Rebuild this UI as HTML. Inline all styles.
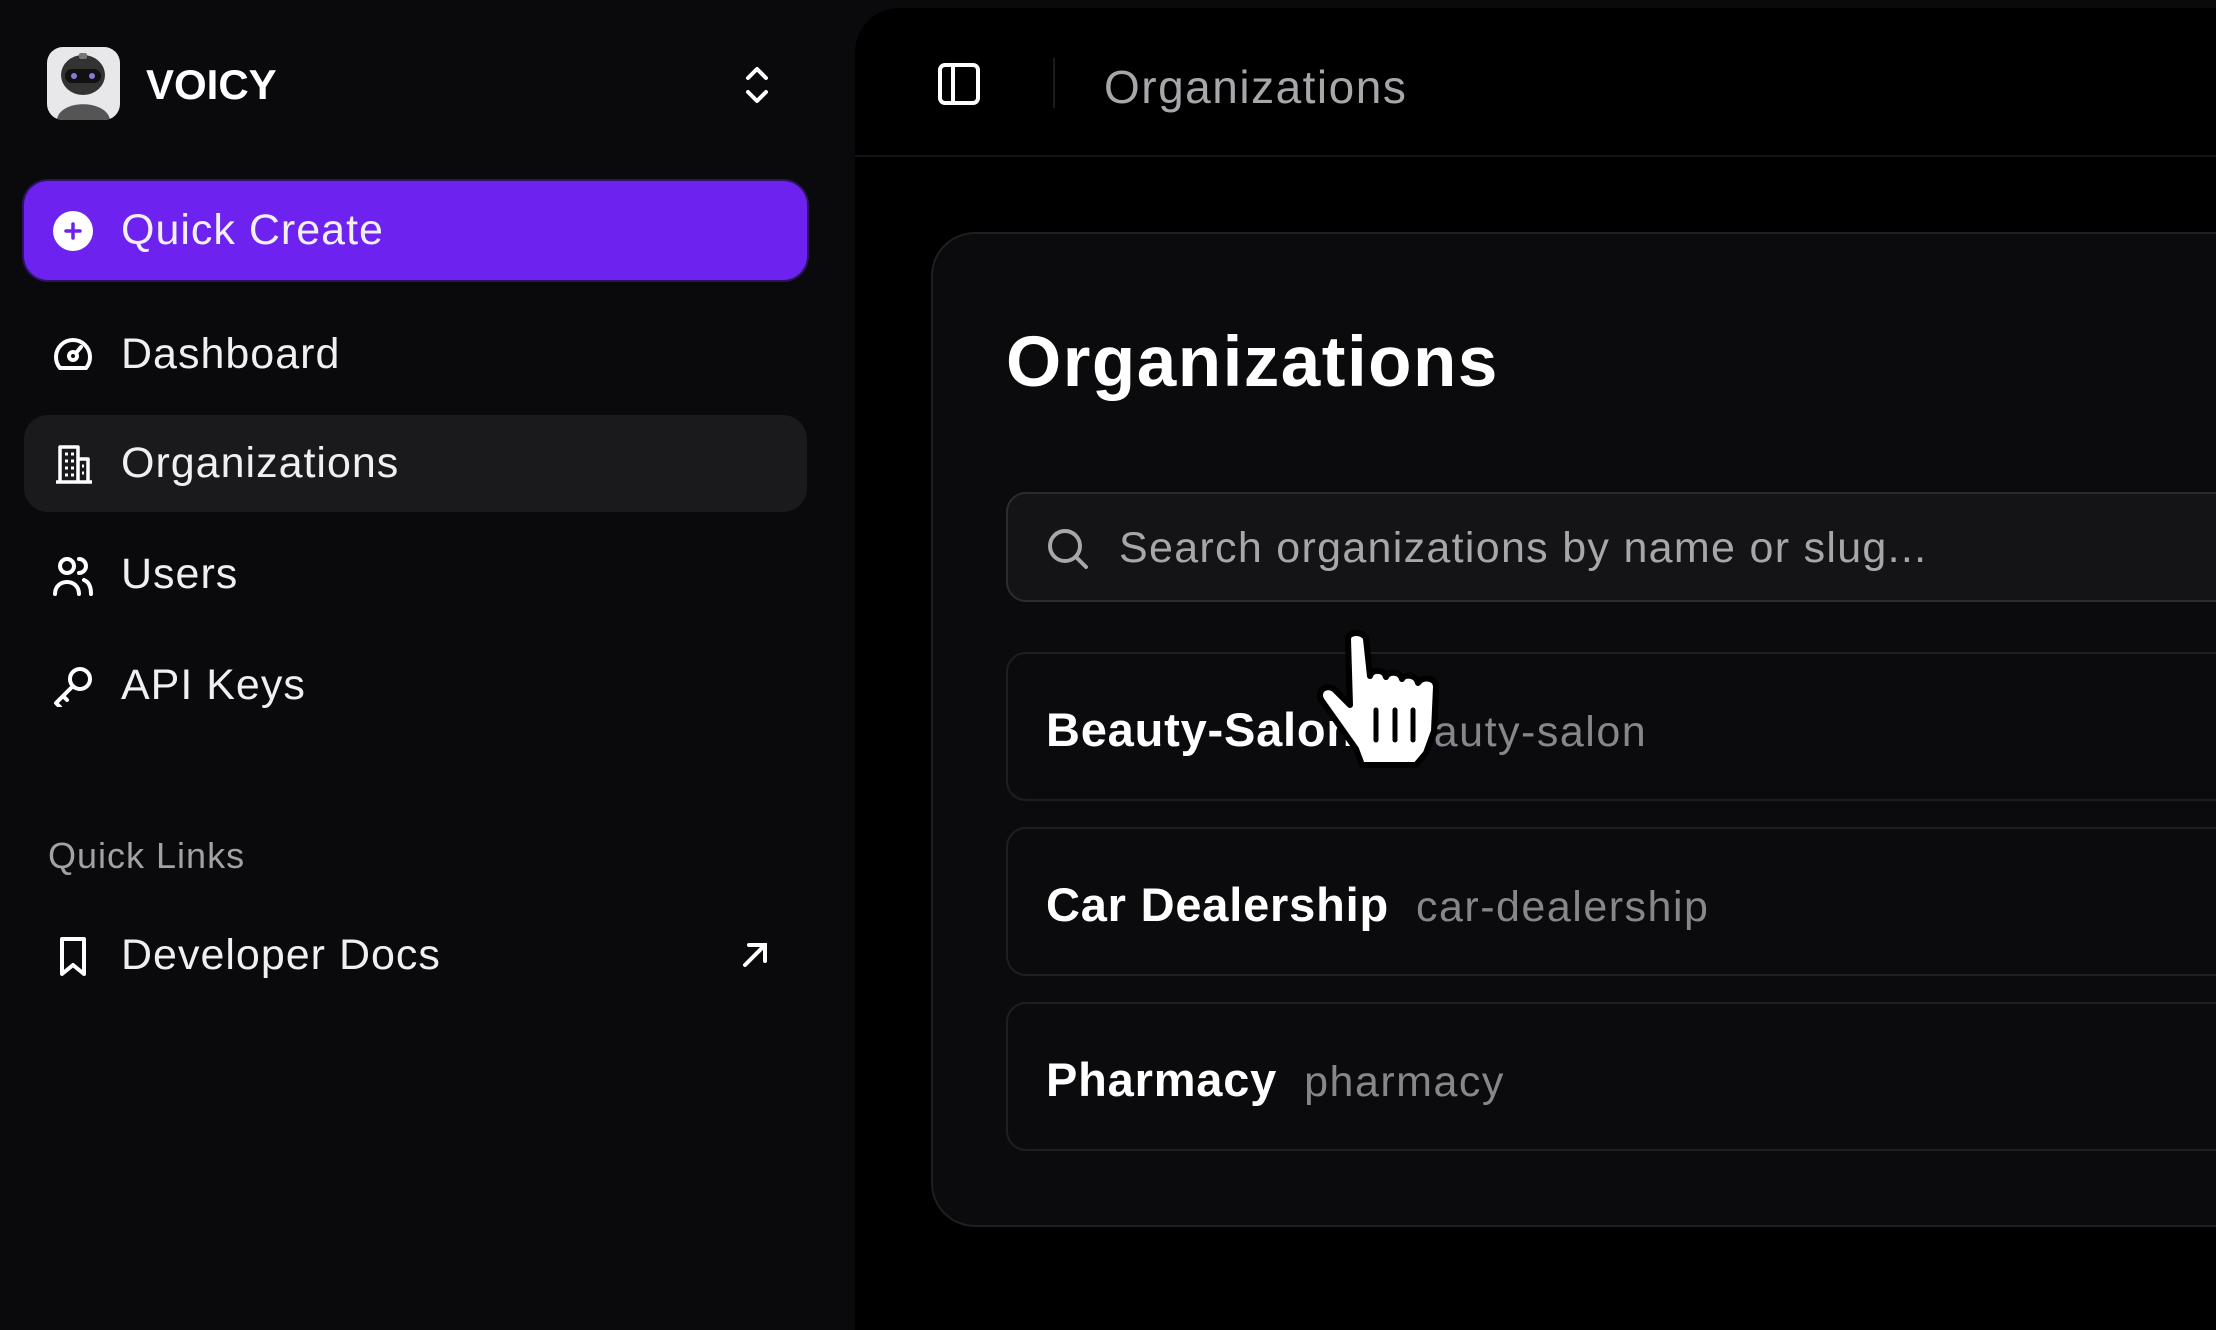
<!DOCTYPE html>
<html><head><meta charset="utf-8"><style>
*{margin:0;padding:0;box-sizing:border-box}
body{width:2216px;height:1330px;background:#0a0a0d;font-family:"Liberation Sans",sans-serif;color:#f4f4f5;position:relative;overflow:hidden}
.sb{position:absolute;left:0;top:0;width:855px;height:1330px;background:#0a0a0d}
.abs{position:absolute}
.item{position:absolute;left:24px;width:783px;height:97px;display:flex;align-items:center;font-size:43px;letter-spacing:1px;color:#f0f0f2}
.item .ic{position:absolute;left:28px;width:42px;height:42px}
.item span{position:absolute;left:97px}
.main{position:absolute;left:855px;top:8px;width:1361px;height:1322px;background:#000;border-top-left-radius:44px}
.nm{font-size:47px;font-weight:bold;color:#fff;letter-spacing:0.8px}
.sl{font-weight:normal;font-size:43px;color:#86868b;margin-left:27px;letter-spacing:1.5px}
</style></head><body>
<div class="sb">
  <div class="abs" style="left:47px;top:47px;width:73px;height:73px;border-radius:16px;background:#e8e8ea;overflow:hidden">
    <svg width="73" height="73" viewBox="0 0 73 73"><ellipse cx="36" cy="28" rx="22" ry="20" fill="#333"/><rect x="18" y="22" width="36" height="14" rx="7" fill="#111"/><circle cx="27" cy="29" r="3" fill="#8a7ad8"/><circle cx="45" cy="29" r="3" fill="#8a7ad8"/><path d="M10 73 C12 52 60 52 63 73Z" fill="#555"/><rect x="32" y="6" width="8" height="6" rx="2" fill="#777"/></svg>
  </div>
  <div class="abs" style="left:146px;top:61px;font-size:42px;font-weight:bold;color:#fff">VOICY</div>
  <svg class="abs" style="left:741px;top:64px" width="32" height="42" viewBox="0 0 32 42" fill="none" stroke="#fff" stroke-width="4" stroke-linecap="round" stroke-linejoin="round"><path d="M7 14 L16 5 L25 14"/><path d="M7 28 L16 37 L25 28"/></svg>

  <div class="item" style="top:181px;height:99px;background:#6d22f0;border-radius:24px;box-shadow:0 0 0 2px #2b1560">
    <svg class="ic" viewBox="0 0 42 42"><circle cx="21" cy="21" r="20" fill="#fff"/><path d="M21 14v14M14 21h14" stroke="#6d22f0" stroke-width="3.5" stroke-linecap="round"/></svg>
    <span>Quick Create</span>
  </div>
  <div class="item" style="top:306px">
    <svg class="ic" viewBox="0 0 42 42" fill="none" stroke="#fff" stroke-width="4" stroke-linecap="round"><path d="M8 34 A17 17 0 1 1 34 34 Z"/><circle cx="21" cy="22" r="4"/><path d="M24 19 L29 13"/></svg>
    <span>Dashboard</span>
  </div>
  <div class="item" style="top:415px;background:#1a1a1d;border-radius:24px">
    <svg class="ic" viewBox="0 0 42 42" fill="none" stroke="#fff" stroke-width="3.5" stroke-linejoin="round"><path d="M4 39h36M8 39V4h18v35M26 16h10v23"/><path d="M13 11h3M19 11h3M13 18h3M19 18h3M13 25h3M19 25h3M13 32h3M19 32h3M30 23h2M30 30h2" stroke-width="3"/></svg>
    <span>Organizations</span>
  </div>
  <div class="item" style="top:526px">
    <svg class="ic" viewBox="0 0 42 42" fill="none" stroke="#fff" stroke-width="4" stroke-linecap="round"><circle cx="15" cy="12" r="7"/><path d="M3 40 C3 24 27 24 27 40"/><path d="M27 5 A7 7 0 0 1 27 19"/><path d="M32 26 C37 28 39 33 39 40"/></svg>
    <span>Users</span>
  </div>
  <div class="item" style="top:637px">
    <svg class="ic" viewBox="0 0 42 42" fill="none" stroke="#fff" stroke-width="4" stroke-linecap="round" stroke-linejoin="round"><circle cx="28" cy="14" r="10"/><path d="M21 21 L4 38 L8 42 M11 31 L15 35"/></svg>
    <span>API Keys</span>
  </div>
  <div class="abs" style="left:48px;top:835px;font-size:36px;letter-spacing:1px;color:#a1a1a6">Quick Links</div>
  <div class="item" style="top:907px">
    <svg class="ic" viewBox="0 0 42 42" fill="none" stroke="#fff" stroke-width="4" stroke-linejoin="round"><path d="M10 4h22v35l-11-9-11 9z"/></svg>
    <span>Developer Docs</span>
    <svg class="abs" style="left:715px;top:32px" width="32" height="32" viewBox="0 0 32 32" fill="none" stroke="#fff" stroke-width="4" stroke-linecap="round"><path d="M6 26 L26 6 M10 6h16v16"/></svg>
  </div>
</div>

<div class="main">
  <svg class="abs" style="left:82px;top:54px" width="44" height="44" viewBox="0 0 44 44" fill="none" stroke="#fff" stroke-width="4"><rect x="3" y="3" width="38" height="38" rx="5"/><path d="M16 3v38"/></svg>
  <div class="abs" style="left:198px;top:50px;width:2px;height:50px;background:#1c1c1f"></div>
  <div class="abs" style="left:249px;top:52px;font-size:46px;letter-spacing:1.5px;color:#a7a7ab">Organizations</div>
  <div class="abs" style="left:0;top:147px;width:1361px;height:2px;background:#141416"></div>

  <div class="abs" style="left:76px;top:224px;width:1400px;height:995px;background:#0b0b0e;border:2px solid #1f1f23;border-radius:44px">
    <div class="abs" style="left:73px;top:88px;font-size:71px;letter-spacing:1.5px;font-weight:bold;color:#fff">Organizations</div>
    <div class="abs" style="left:73px;top:258px;width:1400px;height:110px;background:#141417;border:2px solid #2c2c30;border-radius:20px">
      <svg class="abs" style="left:38px;top:33px" width="44" height="44" viewBox="0 0 44 44" fill="none" stroke="#a7a7ab" stroke-width="4" stroke-linecap="round"><circle cx="19" cy="19" r="15"/><path d="M30 30 L40 40"/></svg>
      <div class="abs" style="left:111px;top:30px;font-size:43px;letter-spacing:1.3px;color:#a7a7ab">Search organizations by name or slug...</div>
    </div>
    <div class="abs" style="left:73px;top:418px;width:1400px;height:149px;border:2px solid #1f1f23;border-radius:20px">
      <div class="abs nm" style="left:38px;top:48px">Beauty-Salon<span class="sl">beauty-salon</span></div>
    </div>
    <div class="abs" style="left:73px;top:593px;width:1400px;height:149px;border:2px solid #1f1f23;border-radius:20px">
      <div class="abs nm" style="left:38px;top:48px">Car Dealership<span class="sl">car-dealership</span></div>
    </div>
    <div class="abs" style="left:73px;top:768px;width:1400px;height:149px;border:2px solid #1f1f23;border-radius:20px">
      <div class="abs nm" style="left:38px;top:48px">Pharmacy<span class="sl">pharmacy</span></div>
    </div>
  </div>
</div>

<svg class="abs" style="left:1313px;top:628px" width="130" height="145" viewBox="-3 -3 130 145">
  <path d="M32 8 C32 0 48 0 50 8 L54 45 C56 38 68 38 70 46 C72 40 84 40 86 48 C88 43 100 43 102 52 C106 45 120 46 120 56 L118 100 L110 122 L100 134 L46 134 L40 118 L6 70 C0 62 8 52 18 58 L34 74 Z" fill="#fff" stroke="#000" stroke-width="6" stroke-linejoin="round"/>
  <path d="M60 79v30M79 79v30M97 79v30" stroke="#000" stroke-width="5" stroke-linecap="round"/>
</svg>
</body></html>
